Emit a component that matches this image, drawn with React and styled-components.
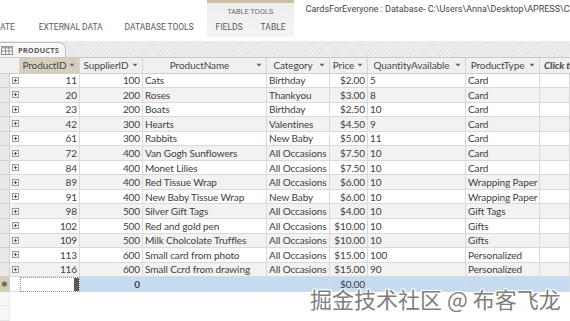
import React from "react";
import styled, { createGlobalStyle } from "styled-components";

const GlobalStyle = createGlobalStyle`
  html, body { margin: 0; padding: 0; background: #ffffff; }
  body { font-family: "Lato", "Liberation Sans", sans-serif; }
`;

const COLS = "10px 10px 60px 63px 124px 63px 38px 98px 74px 1fr";
const ROW_H = 14.55;

const rows = [
  [11, 100, "Cats", "Birthday", "$2.00", 5, "Card"],
  [20, 200, "Roses", "Thankyou", "$3.00", 8, "Card"],
  [23, 200, "Boats", "Birthday", "$2.50", 10, "Card"],
  [42, 300, "Hearts", "Valentines", "$4.50", 9, "Card"],
  [61, 300, "Rabbits", "New Baby", "$5.00", 11, "Card"],
  [72, 400, "Van Gogh Sunflowers", "All Occasions", "$7.50", 10, "Card"],
  [84, 400, "Monet Lilies", "All Occasions", "$7.50", 10, "Card"],
  [89, 400, "Red Tissue Wrap", "All Occasions", "$6.00", 10, "Wrapping Paper"],
  [91, 400, "New Baby Tissue Wrap", "New Baby", "$6.00", 10, "Wrapping Paper"],
  [98, 500, "Silver Gift Tags", "All Occasions", "$4.00", 10, "Gift Tags"],
  [102, 500, "Red and gold pen", "All Occasions", "$10.00", 10, "Gifts"],
  [109, 500, "Milk Cholcolate Truffles", "All Occasions", "$10.00", 10, "Gifts"],
  [113, 600, "Small card from photo", "All Occasions", "$15.00", 100, "Personalized"],
  [116, 600, "Small Ccrd from drawing", "All Occasions", "$15.00", 90, "Personalized"],
];

const headers = [
  { label: "ProductID", selected: true },
  { label: "SupplierID" },
  { label: "ProductName" },
  { label: "Category" },
  { label: "Price" },
  { label: "QuantityAvailable" },
  { label: "ProductType" },
];

const Page = styled.div`
  position: relative;
  width: 570px;
  height: 321px;
  overflow: hidden;
  background: #ffffff;
  display: flex;
  flex-direction: column;
`;

/* ---------- Ribbon ---------- */
const Ribbon = styled.div`
  height: 41px;
  display: flex;
  align-items: stretch;
  background: #ffffff;
  font-family: "Roboto", "Liberation Sans", sans-serif;
`;

const RibbonTab = styled.div`
  display: flex;
  align-items: flex-end;
  padding-bottom: 9px;
  margin-left: ${(p) => p.$ml || 0}px;
  font-size: 8.5px;
  letter-spacing: -0.05px;
  color: #5a5a5a;
  white-space: nowrap;
`;

const ContextGroup = styled.div`
  margin-left: 13px;
  width: 87px;
  height: 37px;
  background: linear-gradient(180deg, #eeeeee 0%, #f4f4f4 100%);
  border-top: 3px solid #c9bfa6;
  border-bottom-right-radius: 3px;
  display: flex;
  flex-direction: column;
  align-items: stretch;
  box-sizing: border-box;
`;

const ContextTitle = styled.div`
  text-align: center;
  font-size: 7.5px;
  color: #6a6a6a;
  margin-top: 4px;
  letter-spacing: -0.1px;
`;

const ContextTabs = styled.div`
  display: flex;
  justify-content: space-between;
  padding: 6px 8px 0 9px;
  font-size: 8.5px;
  color: #5a5a5a;
`;

const Title = styled.div`
  margin-left: 12px;
  padding-top: 4px;
  font-size: 9px;
  color: #444444;
  white-space: nowrap;
  overflow: hidden;
  flex: 1;
  min-width: 0;
`;

/* ---------- Document tabs ---------- */
const TabStrip = styled.div`
  height: 17px;
  display: flex;
  align-items: flex-end;
  background-color: #ededed;
  background-image: repeating-linear-gradient(
    135deg,
    rgba(0, 0, 0, 0.035) 0px,
    rgba(0, 0, 0, 0.035) 1px,
    transparent 1px,
    transparent 3px
  );
  border-bottom: 1px solid #c8c8c8;
  box-sizing: border-box;
`;

const DocTab = styled.div`
  height: 15px;
  width: 66px;
  display: flex;
  align-items: center;
  gap: 5px;
  padding-left: 1px;
  box-sizing: border-box;
  background: #f8f8f8;
  border: 1px solid #bdbdbd;
  border-left: none;
  border-bottom: none;
  border-top-right-radius: 7px;
  font-family: "Open Sans", "Liberation Sans", sans-serif;
  font-weight: 700;
  font-size: 7.5px;
  color: #5c5c5c;
  letter-spacing: 0.1px;
`;

const TableIcon = () => (
  <svg width="12" height="9" viewBox="0 0 12 9">
    <rect x="0.5" y="0.5" width="11" height="8" fill="#fff" stroke="#8c8c8c" />
    <rect x="0.5" y="0.5" width="11" height="2" fill="#a9a9a9" />
    <line x1="4.5" y1="0.5" x2="4.5" y2="8.5" stroke="#8c8c8c" />
    <line x1="8" y1="0.5" x2="8" y2="8.5" stroke="#8c8c8c" />
    <line x1="0.5" y1="5" x2="11.5" y2="5" stroke="#8c8c8c" />
  </svg>
);

/* ---------- Datasheet ---------- */
const Sheet = styled.div`
  display: flex;
  flex-direction: column;
  font-family: "Lato", "Liberation Sans", sans-serif;
  font-size: 10px;
  letter-spacing: -0.1px;
  color: #404040;
  flex: 1;
`;

const HeaderRow = styled.div`
  display: grid;
  grid-template-columns: ${COLS};
  height: 15.5px;
  background: #f0f0f0;
  border-bottom: 1px solid #cfcfcf;
  box-sizing: border-box;
`;

const HeaderCell = styled.div`
  display: grid;
  grid-template-columns: 1fr 10px;
  align-items: center;
  background: ${(p) => (p.$selected ? "#d5cfbc" : "transparent")};
  border-right: 1px solid #d6d6d6;
  color: #474747;
  white-space: nowrap;
  overflow: hidden;
  grid-column: ${(p) => p.$span || "auto"};
`;

const HeaderText = styled.span`
  text-align: center;
  overflow: hidden;
`;

const AddHeader = styled.div`
  display: flex;
  align-items: center;
  padding-left: 4px;
  font-style: italic;
  font-weight: 700;
  color: #474747;
  white-space: nowrap;
  overflow: hidden;
`;

const Arrow = () => (
  <svg width="6" height="4" viewBox="0 0 6 4">
    <path d="M0.5 0.8 H5.5 L3 3.5 Z" fill="#666" />
  </svg>
);

const Row = styled.div`
  display: grid;
  grid-template-columns: ${COLS};
  height: ${ROW_H}px;
  background: ${(p) => (p.$new ? "#c5dbf1" : p.$alt ? "#f2f2f2" : "#ffffff")};
`;

const Selector = styled.div`
  background: ${(p) => (p.$new ? "#d4cdb8" : "#e9e9e9")};
  border-bottom: 1px solid #d0d0d0;
  border-right: 1px solid #cfcfcf;
  display: flex;
  align-items: center;
  justify-content: center;
  color: #6b6650;
  font-size: 8px;
  line-height: 1;
`;

const Expander = styled.div`
  display: flex;
  align-items: center;
  justify-content: center;
  background: ${(p) => (p.$new ? "#ffffff" : "transparent")};
  border-bottom: 1px solid #dcdcdc;
`;

const Cell = styled.div`
  display: flex;
  align-items: center;
  justify-content: ${(p) => (p.$right ? "flex-end" : "flex-start")};
  padding: 0 ${(p) => (p.$right ? "2px" : "0")} 0 ${(p) => (p.$right ? "0" : "2px")};
  border-right: 1px solid #dadada;
  border-bottom: 1px solid #dadada;
  white-space: nowrap;
  overflow: hidden;
  font-weight: ${(p) => (p.$bold ? 700 : 400)};
`;

const FocusCell = styled.div`
  display: flex;
  justify-content: flex-end;
  background: #ffffff;
  border: 1px dotted #8a8a8a;
  box-sizing: border-box;
`;

const Caret = styled.div`
  width: 5px;
  background: #5a5a5a;
`;

const Filler = styled.div`
  flex: 1;
  display: grid;
  grid-template-columns: 10px 1fr;
`;

const FillerStrip = styled.div`
  background-color: #f6f6f6;
  background-image: repeating-linear-gradient(
    180deg,
    transparent 0px,
    transparent 13.5px,
    #e6e6e6 13.5px,
    #e6e6e6 14.5px
  );
  border-right: 1px solid #ececec;
`;

const ExpandBox = () => (
  <svg width="7" height="7" viewBox="0 0 7 7">
    <rect x="0.5" y="0.5" width="6" height="6" fill="#f4f4f4" stroke="#9a9a9a" />
    <line x1="2" y1="3.5" x2="5" y2="3.5" stroke="#555" />
    <line x1="3.5" y1="2" x2="3.5" y2="5" stroke="#555" />
  </svg>
);

const Watermark = styled.div`
  position: absolute;
  left: 310px;
  top: 283px;
  font-family: "Noto Sans CJK SC", sans-serif;
  font-size: 22px;
  line-height: 30px;
  color: #808080;
  white-space: nowrap;
  text-shadow: 1px 0 0 #fff, -1px 0 0 #fff, 0 1px 0 #fff, 0 -1px 0 #fff,
    1px 1px 0 #fff, -1px -1px 0 #fff, 1px -1px 0 #fff, -1px 1px 0 #fff;
`;

export default function App() {
  return (
    <>
      <GlobalStyle />
      <Page>
        <Ribbon>
          <RibbonTab>ATE</RibbonTab>
          <RibbonTab $ml={24}>EXTERNAL DATA</RibbonTab>
          <RibbonTab $ml={22}>DATABASE TOOLS</RibbonTab>
          <ContextGroup>
            <ContextTitle>TABLE TOOLS</ContextTitle>
            <ContextTabs>
              <span>FIELDS</span>
              <span>TABLE</span>
            </ContextTabs>
          </ContextGroup>
          <Title>
            CardsForEveryone : Database- C:\Users\Anna\Desktop\APRESS\CHAPTER
          </Title>
        </Ribbon>

        <TabStrip>
          <DocTab>
            <TableIcon />
            PRODUCTS
          </DocTab>
        </TabStrip>

        <Sheet>
          <HeaderRow>
            <HeaderCell $span="1 / span 2" />
            {headers.map((h) => (
              <HeaderCell key={h.label} $selected={h.selected}>
                <HeaderText>{h.label}</HeaderText>
                <Arrow />
              </HeaderCell>
            ))}
            <AddHeader>Click to Add</AddHeader>
          </HeaderRow>

          {rows.map((r, i) => (
            <Row key={r[0]} $alt={i % 2 === 1}>
              <Selector />
              <Expander>
                <ExpandBox />
              </Expander>
              <Cell $right>{r[0]}</Cell>
              <Cell $right>{r[1]}</Cell>
              <Cell>{r[2]}</Cell>
              <Cell>{r[3]}</Cell>
              <Cell $right>{r[4]}</Cell>
              <Cell>{r[5]}</Cell>
              <Cell>{r[6]}</Cell>
              <Cell />
            </Row>
          ))}

          <Row $new>
            <Selector $new>✱</Selector>
            <Expander $new />
            <FocusCell>
              <Caret />
            </FocusCell>
            <Cell $right $bold>0</Cell>
            <Cell />
            <Cell />
            <Cell $right>$0.00</Cell>
            <Cell />
            <Cell />
            <Cell />
          </Row>

          <Filler>
            <FillerStrip />
            <div />
          </Filler>
        </Sheet>

        <Watermark>掘金技术社区 @ 布客飞龙</Watermark>
      </Page>
    </>
  );
}
